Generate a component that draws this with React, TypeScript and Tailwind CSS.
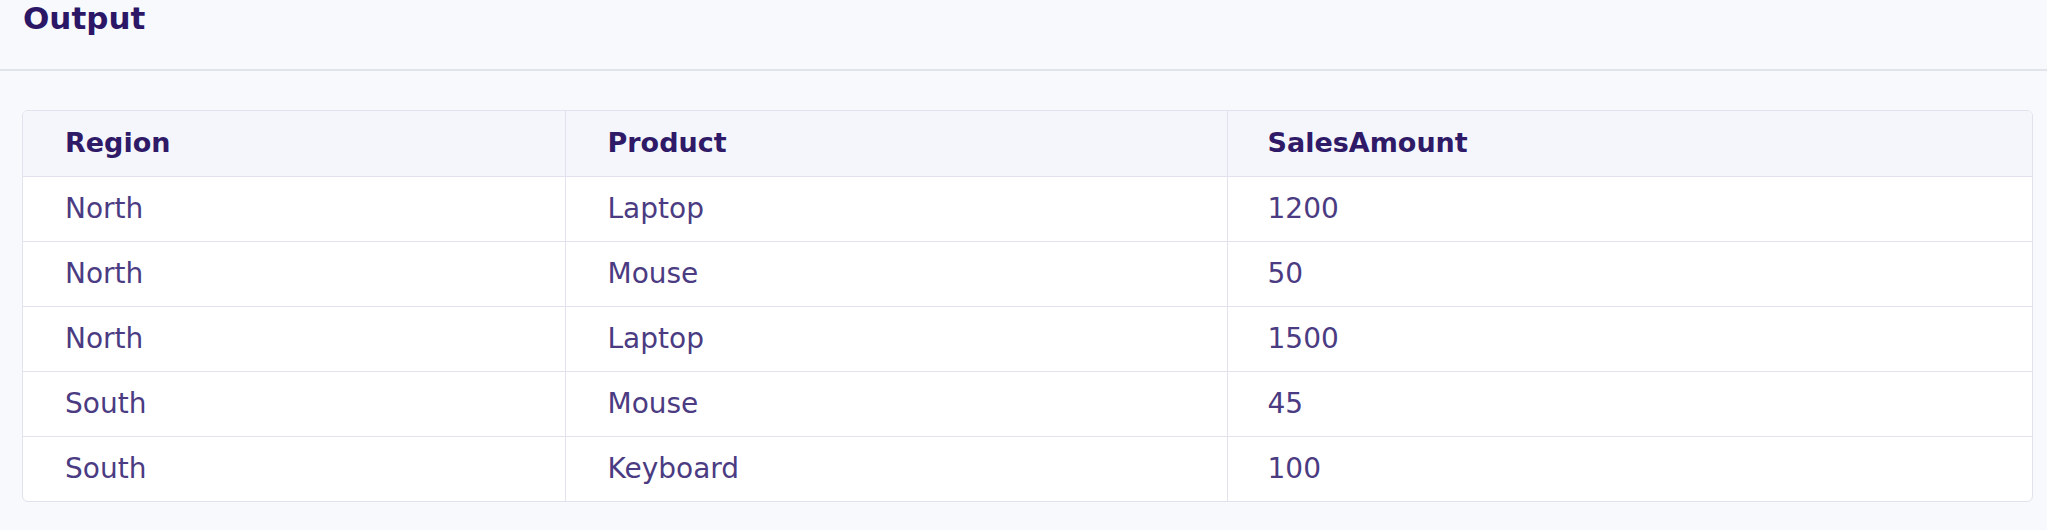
const rows = [
  { region: "North", product: "Laptop", amount: "1200" },
  { region: "North", product: "Mouse", amount: "50" },
  { region: "North", product: "Laptop", amount: "1500" },
  { region: "South", product: "Mouse", amount: "45" },
  { region: "South", product: "Keyboard", amount: "100" },
];

export default function App() {
  return (
    <div
      className="h-[530px] w-full bg-[#f8f9fc] text-[#2d1b69]"
      style={{ fontFamily: '"DejaVu Sans", "Liberation Sans", sans-serif' }}
    >
      <div className="h-[71px] border-b-2 border-[#e2e4ec] pl-[23px]">
        <h2 className="text-[31px] leading-[36px] font-bold text-[#2b1766]">
          Output
        </h2>
      </div>

      <div className="pt-[39px] pr-[14px] pl-[22px]">
        <div className="overflow-hidden rounded-md border border-[#e1e2ee] bg-white">
          <table className="w-full table-fixed border-collapse text-[28px]">
            <colgroup>
              <col className="w-[542px]" />
              <col className="w-[662px]" />
              <col />
            </colgroup>
            <thead>
              <tr className="h-[65px] bg-[#f5f6fc] text-left text-[27px]">
                <th className="border-r border-b border-[#e1e2ee] pl-[42px] font-bold text-[#2f1a68]">
                  Region
                </th>
                <th className="border-r border-b border-[#e1e2ee] pl-[42px] font-bold text-[#2f1a68]">
                  Product
                </th>
                <th className="border-b border-[#e1e2ee] pl-[40px] font-bold text-[#2f1a68]">
                  SalesAmount
                </th>
              </tr>
            </thead>
            <tbody>
              {rows.map((row, i) => {
                const last = i === rows.length - 1;
                return (
                  <tr key={i} className="h-[65px] text-[#4b3b82]">
                    <td
                      className={`border-r border-[#e1e2ee] pl-[42px] ${last ? "" : "border-b"}`}
                    >
                      {row.region}
                    </td>
                    <td
                      className={`border-r border-[#e1e2ee] pl-[42px] ${last ? "" : "border-b"}`}
                    >
                      {row.product}
                    </td>
                    <td className={`border-[#e1e2ee] pl-[40px] ${last ? "" : "border-b"}`}>
                      {row.amount}
                    </td>
                  </tr>
                );
              })}
            </tbody>
          </table>
        </div>
      </div>
    </div>
  );
}
